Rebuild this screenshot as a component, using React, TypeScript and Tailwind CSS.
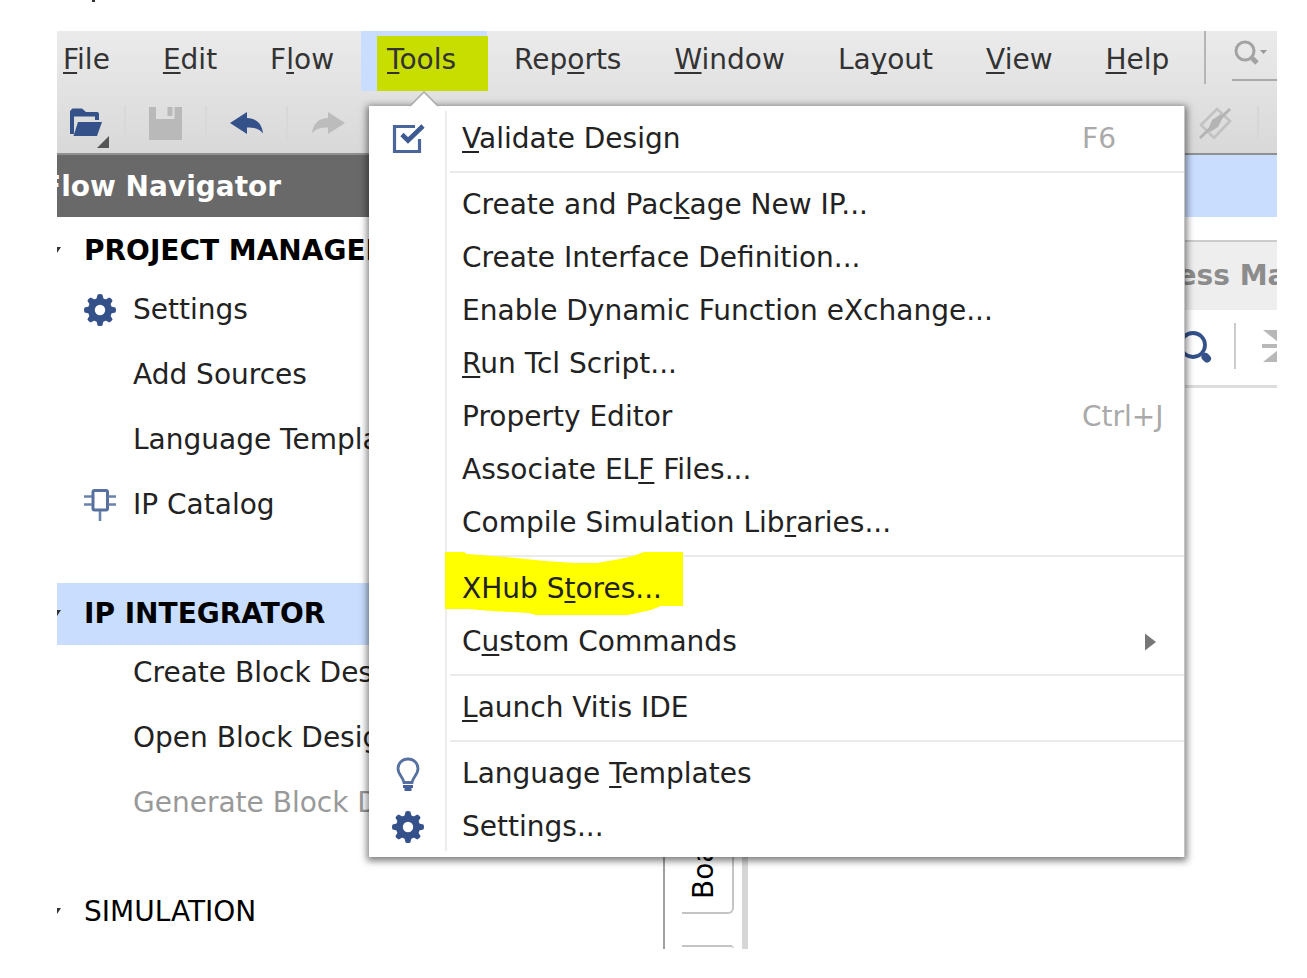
import React from "react";

const NAVY = "#34518a";

/* Text with one underlined mnemonic letter, marked by a leading "&". */
function Mnemonic({ text }: { text: string }) {
  const at = text.indexOf("&");
  if (at < 0) return <>{text}</>;
  return (
    <>
      {text.slice(0, at)}
      <span className="underline decoration-2 underline-offset-3 [text-decoration-skip-ink:none]">
        {text[at + 1]}
      </span>
      {text.slice(at + 2)}
    </>
  );
}

function GearIcon() {
  return (
    <svg width="32" height="32" viewBox="0 0 32 32" aria-hidden="true">
      <g fill={NAVY}>
        <circle cx="16" cy="16" r="12" />
        {[0, 45, 90, 135, 180, 225, 270, 315].map((a) => (
          <path key={a} d="M12.2 6 L13.6 0.6 Q16 -0.6 18.4 0.6 L19.8 6 Z" transform={`rotate(${a} 16 16)`} />
        ))}
      </g>
      <circle cx="16" cy="16" r="5.2" fill="#fff" />
    </svg>
  );
}

function ChipIcon() {
  return (
    <svg width="32" height="32" viewBox="0 0 32 32" fill="none" aria-hidden="true">
      <rect x="9" y="1.5" width="14.5" height="19.5" rx="1.5" stroke="#5670a0" strokeWidth="3" />
      <path d="M0 7.500H8M0 15.500H8M24.500 7.500H32.500M24.500 15.500H32.500M16 22V32" stroke="#6b82ad" strokeWidth="2.600" />
    </svg>
  );
}

function CheckBoxIcon() {
  return (
    <svg width="33" height="30" viewBox="0 0 33 30" fill="none" aria-hidden="true">
      <path d="M23 2.500H2.500V27.500H27.500V15" stroke="#4a659a" strokeWidth="3.200" />
      <path d="M10 10.500L16 16.500L31 2" stroke="#3e5a92" strokeWidth="4.600" />
    </svg>
  );
}

function BulbIcon() {
  return (
    <svg width="24" height="34" viewBox="0 0 24 34" fill="none" aria-hidden="true">
      <path
        d="M8 25.500C7.500 20.500 2 17.500 2 11.500C2 6 6.500 2 12 2S22 6 22 11.500C22 17.500 16.500 20.500 16 25.500Z"
        stroke="#5670a0"
        strokeWidth="2.800"
      />
      <path d="M7 29.500H17M8.500 32.500H15.500" stroke="#45609a" strokeWidth="3" />
    </svg>
  );
}

function FolderIcon() {
  return (
    <svg width="40" height="40" viewBox="0 0 40 40" aria-hidden="true">
      <path d="M1 26V3L3.500 0.500H13L17 4H28Q30 4 30 6V12H26V8.500H5V26Z" fill={NAVY} />
      <path d="M9 14H33L28 28H4.500Z" fill={NAVY} />
      <path d="M40 28V40H28Z" fill="#555" />
    </svg>
  );
}

function SaveIcon() {
  return (
    <svg width="33" height="33" viewBox="0 0 33 33" aria-hidden="true">
      <path d="M0 0H7V12H25.500V0H33V33H0Z" fill="#b9b9b9" />
      <path d="M18.500 0H23.500V9H18.500Z" fill="#b9b9b9" />
    </svg>
  );
}

function ArrowIcon({ color, flip }: { color: string; flip?: boolean }) {
  return (
    <svg width="34" height="22" viewBox="0 0 34 22" aria-hidden="true">
      <path
        d="M0 11L17 0V6C27 6.500 32 12 33 21.500C29 16.500 24 15.500 17 15.500V22Z"
        fill={color}
        transform={flip ? "translate(34 0) scale(-1 1)" : undefined}
      />
    </svg>
  );
}

function MeasureIcon() {
  return (
    <svg width="33" height="33" viewBox="0 0 33 33" fill="none" aria-hidden="true">
      <path d="M18 2L31 14L15 31L2 18Z" stroke="#c2c2c2" strokeWidth="2.600" />
      <path d="M1 31L31 2" stroke="#b4b4b4" strokeWidth="3" />
      <path d="M9 23L13 13L22 7L24 10L19 20L11 25Z" fill="#b4b4b4" />
    </svg>
  );
}

const sections = [
  {
    title: "PROJECT MANAGER",
    head: "font-bold",
    items: [
      { label: "Settings", icon: <GearIcon /> },
      { label: "Add Sources" },
      { label: "Language Templates" },
      { label: "IP Catalog", icon: <ChipIcon /> },
    ],
  },
  {
    title: "IP INTEGRATOR",
    head: "bg-[#c9deff] font-bold",
    items: [
      { label: "Create Block Design" },
      { label: "Open Block Design" },
      { label: "Generate Block Design", disabled: true },
    ],
  },
  { title: "SIMULATION", head: "", items: [] },
] as {
  title: string;
  head: string;
  items: { label: string; icon?: React.ReactNode; disabled?: boolean }[];
}[];

type Entry = {
  label: string;
  icon?: React.ReactNode;
  keys?: string;
  submenu?: boolean;
  marked?: boolean;
};

const toolGroups: Entry[][] = [
  [{ label: "&Validate Design", icon: <CheckBoxIcon />, keys: "F6" }],
  [
    { label: "Create and Pac&kage New IP..." },
    { label: "Create Interface Definition..." },
    { label: "Enable Dynamic Function eXchange..." },
    { label: "&Run Tcl Script..." },
    { label: "Property Editor", keys: "Ctrl+J" },
    { label: "Associate EL&F Files..." },
    { label: "Compile Simulation Lib&raries..." },
  ],
  [
    { label: "XHub S&tores...", marked: true },
    { label: "C&ustom Commands", submenu: true },
  ],
  [{ label: "&Launch Vitis IDE" }],
  [
    { label: "Language &Templates", icon: <BulbIcon /> },
    { label: "Settings...", icon: <GearIcon /> },
  ],
];

function ToolsMenu() {
  return (
    <div className="absolute left-2 top-[75px] z-20 w-[816px] border-r border-[#c4c4c4] bg-white pb-1 pt-[6px] text-[#222] shadow-[0_2px_7px_2px_rgba(0,0,0,0.5)]">
      <svg className="absolute -top-[15px] left-[41px]" width="28" height="16" viewBox="0 0 28 16" aria-hidden="true">
        <path d="M0 16L14 1L28 16Z" fill="#fff" />
        <path d="M0 15L14 1L28 15" fill="none" stroke="#aaa" strokeWidth="1.500" />
      </svg>
      <div className="absolute bottom-[6px] left-[76px] top-[5px] w-[2px] bg-[#ececec]" />
      {toolGroups.map((group, g) => (
        <React.Fragment key={g}>
          {g > 0 && (
            <div className="flex h-[13px] items-center pl-[81px]">
              <hr className="w-full border-t-2 border-[#ebebeb]" />
            </div>
          )}
          <ul>
            {group.map((e) => (
              <li key={e.label} className="relative">
                {e.marked && (
                  <svg
                    className="absolute -top-[10px] left-[76px]"
                    width="238"
                    height="64"
                    viewBox="0 0 238 64"
                    aria-hidden="true"
                  >
                    <path
                      d="M0 0H19L22 2L60 5L100 9L130 11H152L175 7L188 4L199 0H238V54H216L206 58L183 63H91L84 61L47 59L23 57H0Z"
                      fill="#ff0"
                    />
                  </svg>
                )}
                <button type="button" className="relative flex h-[53px] w-full items-center text-left">
                  <span className="flex w-[78px] shrink-0 justify-center">{e.icon}</span>
                  <span className="flex-1 whitespace-nowrap pl-[15px]">
                    <Mnemonic text={e.label} />
                  </span>
                  {e.keys && <span className="w-[102px] text-[#aaa]">{e.keys}</span>}
                  {e.submenu && (
                    <svg className="mr-[28px]" width="11" height="18" viewBox="0 0 11 18" aria-hidden="true">
                      <path d="M0 0.500L11 9L0 17.500Z" fill="#777" />
                    </svg>
                  )}
                </button>
              </li>
            ))}
          </ul>
        </React.Fragment>
      ))}
    </div>
  );
}

function MenuBar() {
  const names = ["&File", "&Edit", "F&low", "&Tools", "Rep&orts", "&Window", "La&yout", "&View", "&Help"];
  return (
    <nav className="flex h-[60px] items-start">
      <ul className="-ml-5 flex gap-px">
        {names.map((n) =>
          n === "&Tools" ? (
            <li key={n} className="relative">
              <button type="button" className="relative h-[60px] bg-[#c9deff] pb-[2px] pl-[26px] pr-[31px]">
                <span className="absolute -right-px bottom-0 left-4 top-[5px] bg-[#c8de00]" />
                <span className="relative">
                  <Mnemonic text={n} />
                </span>
              </button>
              <ToolsMenu />
            </li>
          ) : (
            <li key={n}>
              <button type="button" className="h-[60px] px-[26px] pb-[2px]">
                <Mnemonic text={n} />
              </button>
            </li>
          ),
        )}
      </ul>
      <div className="ml-[9px] h-[53px] w-[2px] shrink-0 bg-[#b5b5b5]" />
      <label className="ml-[26px] flex h-[50px] min-w-0 flex-1 items-start border-b-2 border-[#aaa] pt-[9px]">
        <svg className="ml-[2px] shrink-0" width="34" height="26" viewBox="0 0 34 26" fill="none" aria-hidden="true">
          <circle cx="11" cy="11" r="9" stroke="#a3a3a3" strokeWidth="3" />
          <path d="M18 18L23 23" stroke="#a3a3a3" strokeWidth="5" />
          <path d="M26 10H33L29.500 14Z" fill="#999" />
        </svg>
        <input type="search" aria-label="Quick Access" className="w-full min-w-0 bg-transparent outline-none" />
      </label>
    </nav>
  );
}

function Toolbar() {
  const cell = "flex h-[34px] w-[81px] items-center justify-center border-l-2 border-[#d8d8d8]";
  return (
    <div className="flex h-16 items-start border-b-2 border-[#909090] pt-[15px]">
      <button type="button" aria-label="Open" className="flex w-[67px] justify-end pr-[15px] pt-[2px]">
        <FolderIcon />
      </button>
      <button type="button" aria-label="Save" className={cell}>
        <SaveIcon />
      </button>
      <button type="button" aria-label="Undo" className={cell}>
        <ArrowIcon color={NAVY} />
      </button>
      <button type="button" aria-label="Redo" className={cell}>
        <ArrowIcon color="#bcbcbc" flip />
      </button>
      <div className="ml-auto flex">
        <button type="button" aria-label="Measure" className="mr-[25px]">
          <MeasureIcon />
        </button>
        <div className="h-[34px] w-5 border-l-2 border-[#d6d6d6]" />
      </div>
    </div>
  );
}

function FlowNavigator() {
  return (
    <aside className="w-[606px] shrink-0">
      <h2 className="flex h-[62px] items-center overflow-hidden bg-[#696969] pt-[2px] font-bold text-white">
        <span className="-ml-[15px]">Flow Navigator</span>
      </h2>
      <div className="pb-[6px] pt-[3px] whitespace-nowrap">
        {sections.map((s) => (
          <section key={s.title} className="not-last:mb-[46px]">
            <h3 className={`flex h-[62px] items-center text-black ${s.head}`}>
              <svg className="w-[27px]" width="27" height="8" viewBox="0 0 27 8" aria-hidden="true">
                <path d="M0 0H4L0 6Z" fill="#333" />
              </svg>
              {s.title}
            </h3>
            {s.items.length > 0 && (
              <ul className="-mt-[5px]">
                {s.items.map((i) => (
                  <li key={i.label}>
                    <button
                      type="button"
                      disabled={i.disabled}
                      className="flex h-[65px] w-full items-center pl-[27px] text-[#222] disabled:text-[#999]"
                    >
                      <span className="w-[49px]">{i.icon}</span>
                      {i.label}
                    </button>
                  </li>
                ))}
              </ul>
            )}
          </section>
        ))}
      </div>
    </aside>
  );
}

function Workspace() {
  return (
    <main className="flex min-w-0 flex-1 flex-col">
      <div className="h-[62px] bg-[#c9deff]" />
      <div className="flex flex-1 border-l-2 border-[#a0a0a0]">
        <div className="flex w-[77px] shrink-0 flex-col justify-end pl-[17px]">
          <button
            type="button"
            className="flex h-[200px] w-[52px] rounded-br-md border-b-2 border-r-2 border-[#c4c4c4] pb-[13px] pl-[6px] text-black"
          >
            <span className="h-full rotate-180 text-left [writing-mode:vertical-rl]">Board</span>
          </button>
          <div className="mt-[31px] h-1 w-[52px] rounded-tr-md border-t-2 border-[#c4c4c4]" />
        </div>
        <div className="min-w-0 flex-1 border-l-6 border-[#d6d6d6] pt-[23px]">
          <div className="flex h-[70px] items-center overflow-hidden border-t-2 border-[#ccc] bg-[#eee] pl-[354px] font-bold whitespace-nowrap text-[#8c8c8c]">
            Address Map
          </div>
          <div className="flex h-[78px] items-center overflow-hidden border-b-3 border-[#ddd] pb-1 pl-[431px]">
            <button type="button" aria-label="Search" className="shrink-0">
              <svg width="34" height="34" viewBox="0 0 34 34" fill="none" aria-hidden="true">
                <circle cx="14" cy="16" r="12" stroke={NAVY} strokeWidth="3.800" />
                <path d="M26.500 28L28 29.500" stroke={NAVY} strokeWidth="8" strokeLinecap="round" />
              </svg>
            </button>
            <div className="ml-[21px] h-[46px] w-[2px] shrink-0 bg-[#ccc]" />
            <button type="button" aria-label="Collapse all" className="ml-[26px] shrink-0">
              <svg width="32" height="32" viewBox="0 0 32 32" aria-hidden="true">
                <path d="M1 0H31L16 12ZM0 14H32V18H0ZM1 32H31L16 20Z" fill="#b8b8b8" />
              </svg>
            </button>
          </div>
        </div>
      </div>
    </main>
  );
}

export default function App() {
  return (
    <div className="min-h-screen bg-white pb-[29px] pl-[57px] pr-[30px] font-['DejaVu_Sans',sans-serif] text-[28px] leading-8 text-[#333]">
      <div className="h-[31px]">
        <div className="ml-[35px] h-[2px] w-[3px] bg-[#333]" />
      </div>
      <div className="overflow-hidden">
        <header className="bg-linear-to-b from-[#ebebeb] to-[#d8d8d8]">
          <MenuBar />
          <Toolbar />
        </header>
        <div className="flex">
          <FlowNavigator />
          <Workspace />
        </div>
      </div>
    </div>
  );
}
